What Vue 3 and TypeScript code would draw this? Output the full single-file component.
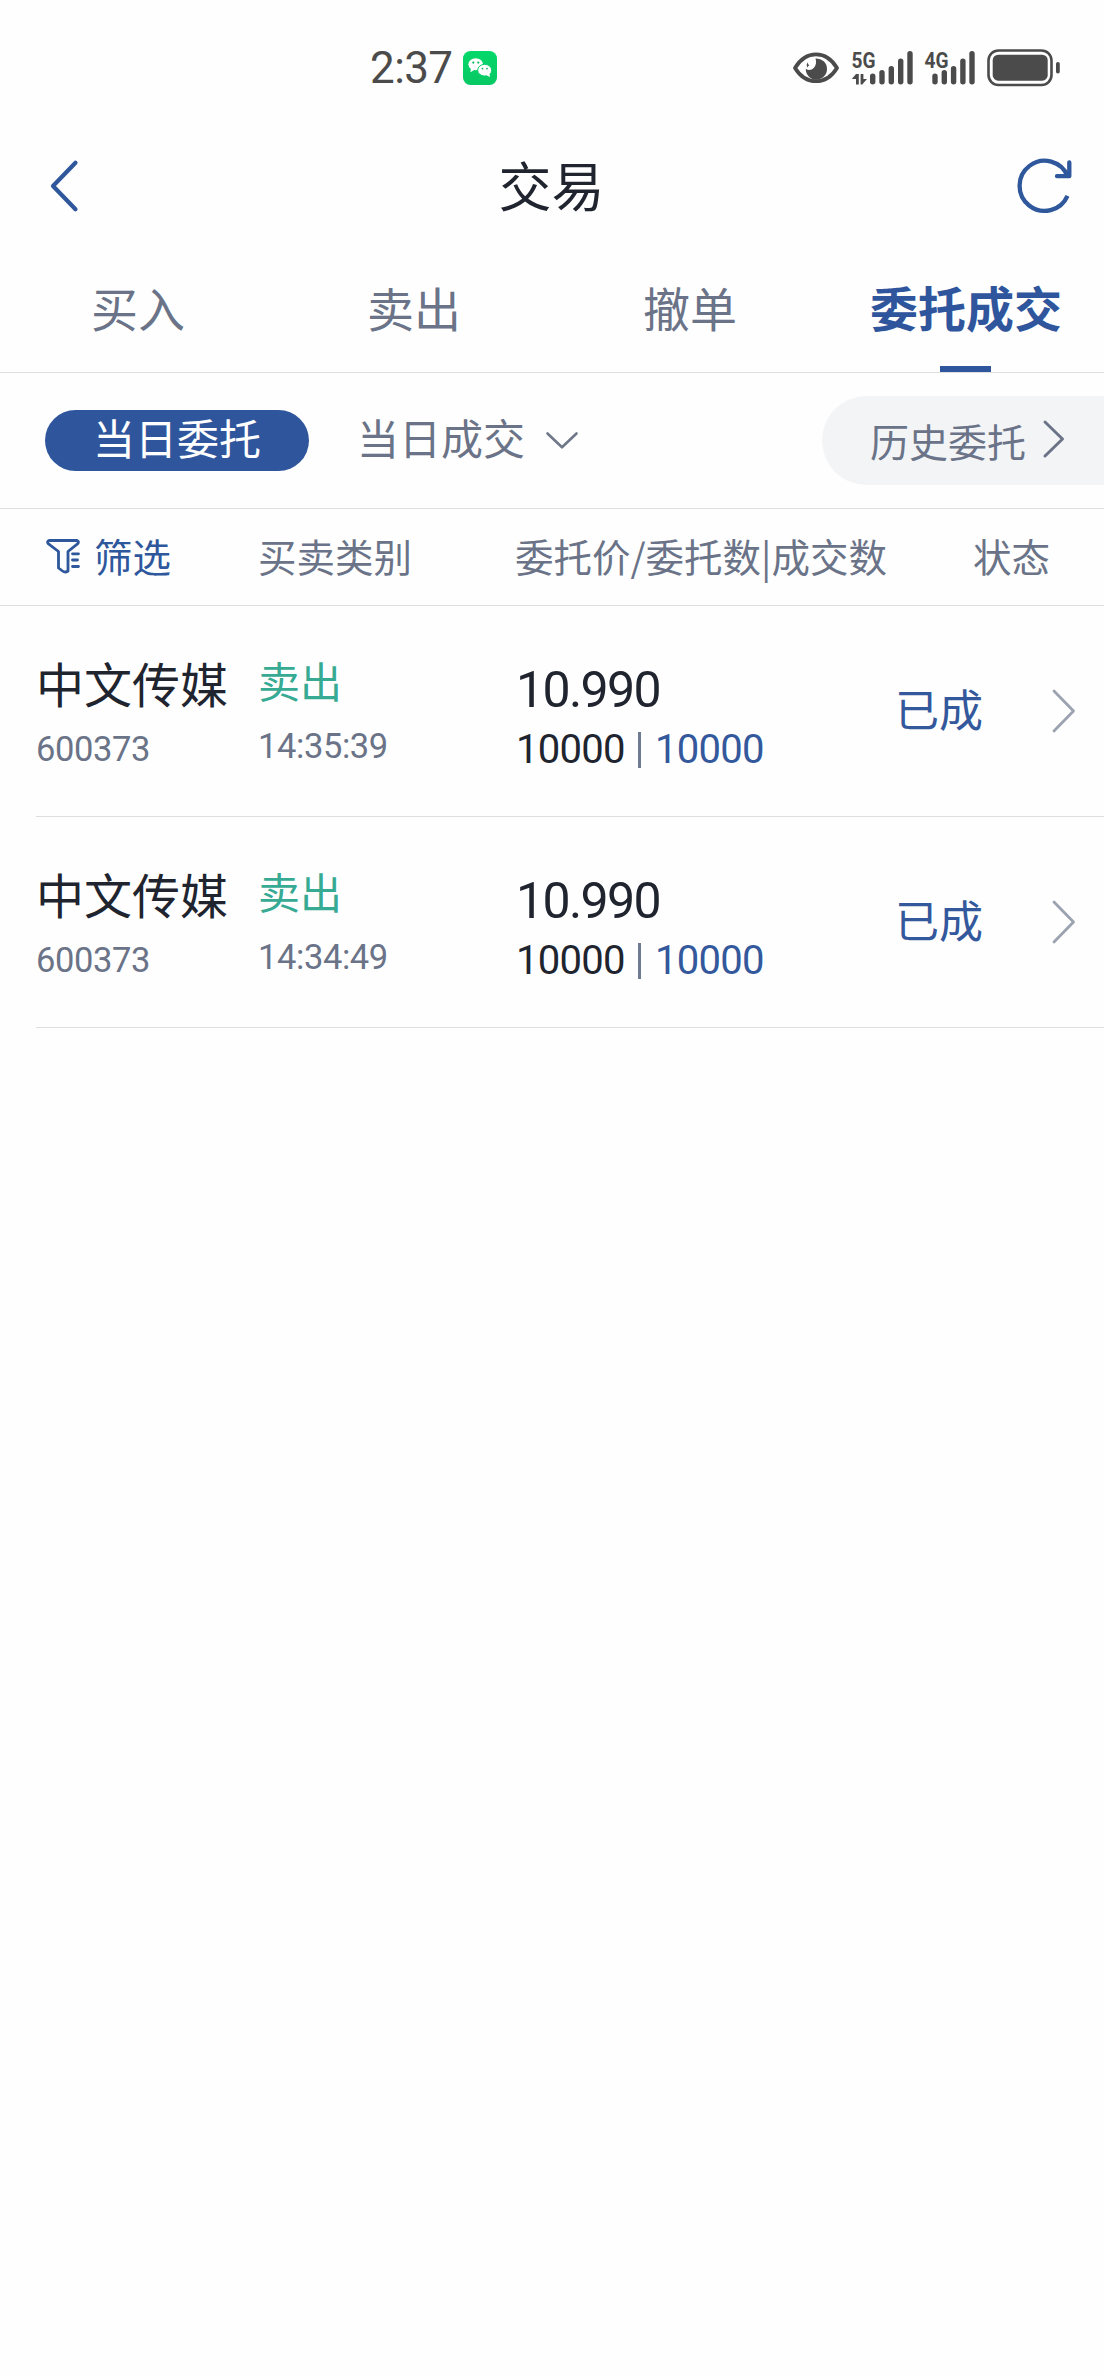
<script setup lang="ts">
interface Tab {
  label: string
  active?: boolean
}

interface Order {
  name: string
  code: string
  side: string
  time: string
  price: string
  amount: string
  filled: string
  status: string
}

interface Signal {
  label: string
  arrows: boolean
  bars: number[]
}

const tabs: Tab[] = [
  { label: '买入' },
  { label: '卖出' },
  { label: '撤单' },
  { label: '委托成交', active: true },
]

const orders: Order[] = [
  { name: '中文传媒', code: '600373', side: '卖出', time: '14:35:39', price: '10.990', amount: '10000', filled: '10000', status: '已成' },
  { name: '中文传媒', code: '600373', side: '卖出', time: '14:34:49', price: '10.990', amount: '10000', filled: '10000', status: '已成' },
]

const barTops: number[] = [23.5, 20, 16, 8.5, 1]

const signals: Signal[] = [
  { label: '5G', arrows: true, bars: [21.7, 31, 40.3, 49.7, 59] },
  { label: '4G', arrows: false, bars: [11, 20.3, 29.6, 38.9, 48] },
]
</script>

<template>
  <main class="screen">
    <div class="statusbar">
      <div class="clock">
        <span class="clock-time">2:37</span>
        <svg class="wechat" viewBox="0 0 34 34">
          <defs>
            <linearGradient id="wx" x1="0" y1="0" x2="0" y2="1">
              <stop offset="0" stop-color="#04d86a" />
              <stop offset="1" stop-color="#08c864" />
            </linearGradient>
          </defs>
          <rect width="34" height="34" rx="7.500" fill="url(#wx)" />
          <ellipse cx="12.700" cy="13.200" rx="7.300" ry="6" fill="#fff" />
          <path d="M8 17l-.6 4.200 4.200-2.400z" fill="#fff" />
          <ellipse cx="21.700" cy="19.200" rx="7" ry="5.900" fill="#fff" stroke="#06cf67" stroke-width="1" />
          <path d="M26.500 22.500l.5 3.400-3.600-1.700z" fill="#fff" />
          <g fill="#06b85c">
            <circle cx="10.300" cy="11.600" r="1.100" />
            <circle cx="15.300" cy="11.600" r="1.100" />
            <circle cx="19.500" cy="17.600" r=".9" />
            <circle cx="24" cy="17.600" r=".9" />
          </g>
        </svg>
      </div>
      <div class="indicators">
        <svg class="eye" viewBox="0 0 46 32">
          <path d="M2 16Q10 2.300 23 2.300T44 16Q36 29.200 23 29.200T2 16z" fill="none" stroke="#4b4b4b" stroke-width="3.800" stroke-linejoin="round" />
          <path d="M22.500 6.500a10.600 10.600 0 1 1-9.700 10.200c2.300 1.900 5.800 1.600 7.900-.6 2.500-2.500 2.900-6.300 1.800-9.600z" fill="#4b4b4b" />
          <path d="M14.400 10.300q.4 2.300 2 2.900-1.700.8-2.200 2.600-1.200-2.600.2-5.500z" fill="#4b4b4b" />
        </svg>
        <svg v-for="s in signals" :key="s.label" class="signal" :class="{ plain: !s.arrows }" :viewBox="s.arrows ? '0 0 64 36' : '0 0 52 36'">
          <text x="0.500" y="17.500" textLength="24" lengthAdjust="spacingAndGlyphs">{{ s.label }}</text>
          <g v-if="s.arrows" fill="#4b4b4b">
            <path d="M5 24h2.800v10.500h-2.800v-5.500h-4.200z" />
            <path d="M9.600 24h2.800v5h3.600l-4.800 5.500h-1.600z" />
          </g>
          <line
            v-for="(x, i) in s.bars"
            :key="i"
            :x1="x"
            :x2="x"
            :y1="barTops[i] + 2.7"
            y2="31.800"
            stroke="#4b4b4b"
            stroke-width="5.400"
            stroke-linecap="round"
          />
        </svg>
        <svg class="battery" viewBox="0 0 73 38">
          <rect x="1.500" y="1.500" width="63" height="34.500" rx="10" fill="none" stroke="#4b4b4b" stroke-width="2.600" />
          <rect x="5.700" y="5.700" width="55" height="26" rx="5.500" fill="#4b4b4b" />
          <rect x="69" y="13" width="3.800" height="11.500" rx="1.800" fill="#4b4b4b" />
        </svg>
      </div>
    </div>

    <header class="titlebar">
      <svg class="back" viewBox="0 0 28 52">
        <path d="M25.500 2.800L3 26l22.500 23.200" fill="none" stroke="#2f579c" stroke-width="4.200" stroke-linecap="round" stroke-linejoin="round" />
      </svg>
      <h1>交易</h1>
      <svg class="refresh" viewBox="0 0 56 56">
        <path d="M50.700 18.300A25 25 0 1 0 50.500 37.800" fill="none" stroke="#2f579c" stroke-width="4.300" />
        <path d="M40 18.200h12.300V4.500" fill="none" stroke="#2f579c" stroke-width="4.300" stroke-linecap="round" stroke-linejoin="round" />
      </svg>
    </header>

    <nav class="tabs">
      <div v-for="t in tabs" :key="t.label" class="tab" :class="{ active: t.active }">{{ t.label }}</div>
    </nav>

    <section class="filters">
      <div class="pill">当日委托</div>
      <div class="dropdown">
        <span>当日成交</span>
        <svg viewBox="0 0 32 17">
          <path d="M1.500 1.500L16 15.300 30.500 1.500" fill="none" stroke="#6f7788" stroke-width="2.600" stroke-linecap="round" stroke-linejoin="round" />
        </svg>
      </div>
      <div class="history">
        <span>历史委托</span>
        <svg viewBox="0 0 22 38">
          <path d="M2 2l17.500 17L2 36" fill="none" stroke="#6b7487" stroke-width="3" stroke-linecap="round" stroke-linejoin="round" />
        </svg>
      </div>
    </section>

    <div class="columns head">
      <div class="col-name filter">
        <svg viewBox="0 0 34 35">
          <g fill="none" stroke="#2f579c" stroke-width="2.800" stroke-linecap="round" stroke-linejoin="round">
            <path d="M3 1.500h28q2.400 1.200.8 3.200L22 12.500V32q-2.800 2-5.500 0l-4-3V12.500L2.200 4.700Q.6 2.700 3 1.500z" />
            <path d="M26.500 14.800h6M26.500 21h5M26.500 27.500h6" />
          </g>
        </svg>
        <span>筛选</span>
      </div>
      <div class="col-side">买卖类别</div>
      <div class="col-price">委托价/委托数|成交数</div>
      <div class="col-state">状态</div>
    </div>

    <ul class="orders">
      <li v-for="o in orders" :key="o.time" class="columns order">
        <div class="col-name">
          <div class="name">{{ o.name }}</div>
          <div class="code">{{ o.code }}</div>
        </div>
        <div class="col-side">
          <div class="side">{{ o.side }}</div>
          <div class="time">{{ o.time }}</div>
        </div>
        <div class="col-price">
          <div class="price">{{ o.price }}</div>
          <div class="amounts">
            <span>{{ o.amount }}</span>
            <i class="divider"></i>
            <span class="filled">{{ o.filled }}</span>
          </div>
        </div>
        <div class="status">{{ o.status }}</div>
        <svg class="more" viewBox="0 0 24 44">
          <path d="M2 2l19.500 20L2 42" fill="none" stroke="#9ba2b0" stroke-width="2.800" stroke-linecap="round" stroke-linejoin="round" />
        </svg>
      </li>
    </ul>
  </main>
</template>

<style>
body {
  background: #fefefe;
}
</style>

<style scoped>
.screen {
  width: 1104px;
  height: 2376px;
  overflow: hidden;
  box-sizing: border-box;
  background: #fefefe;
  color: #6a7387;
  font-family: "Noto Sans CJK SC", sans-serif;
}

svg {
  display: block;
  flex: none;
  overflow: visible;
}

.statusbar {
  height: 136px;
  display: flex;
  justify-content: space-between;
  padding: 0 44px 0 370px;
  box-sizing: border-box;
}

.clock {
  display: flex;
  height: 136px;
  align-items: center;
}

.clock-time {
  width: 93px;
  font: 44px/60px Roboto, sans-serif;
  letter-spacing: -0.6px;
  color: #4b4b4b;
}

.wechat {
  width: 34px;
  height: 34px;
}

.indicators {
  display: flex;
  height: 136px;
  align-items: center;
}

.eye {
  width: 46px;
  height: 32px;
  margin-right: 12px;
}

.signal {
  width: 64px;
  height: 36px;
  margin-right: 9px;
}

.signal.plain {
  width: 52px;
  margin-right: 11px;
}

.signal text {
  font: 700 22.500px Roboto, sans-serif;
  fill: #4b4b4b;
}

.battery {
  width: 73px;
  height: 38px;
}

.titlebar {
  height: 100px;
  display: flex;
  align-items: center;
  justify-content: space-between;
  padding: 0 31px 0 50px;
}

.back {
  width: 28px;
  height: 52px;
  margin-right: 8px;
}

h1 {
  margin: -4px 0 0;
  font-size: 53px;
  line-height: 76px;
  font-weight: 400;
  color: #20242f;
}

.refresh {
  width: 56px;
  height: 56px;
}

.tabs {
  display: flex;
  height: 136px;
  border-bottom: 1px solid #dededf;
}

.tab {
  position: relative;
  flex: 1 1 0;
  text-align: center;
  font-size: 47px;
  line-height: 141px;
}

.tab.active {
  color: #2f569d;
  font-size: 48px;
  font-weight: 700;
}

.tab.active::after {
  content: "";
  position: absolute;
  left: 50%;
  bottom: 0;
  width: 51px;
  height: 6px;
  margin-left: -26px;
  background: #2f569d;
}

.filters {
  height: 135px;
  display: flex;
  align-items: center;
  border-bottom: 1px solid #dededf;
  padding-left: 45px;
}

.pill {
  width: 264px;
  height: 61px;
  border-radius: 31px;
  background: #2f569d;
  color: #fff;
  font-size: 42px;
  line-height: 54px;
  text-align: center;
}

.dropdown {
  display: flex;
  align-items: center;
  gap: 21px;
  margin-left: 48px;
  font-size: 42px;
  line-height: 54px;
  height: 61px;
}

.dropdown span {
  height: 61px;
}

.dropdown svg {
  width: 32px;
  height: 17px;
}

.history {
  width: 282px;
  height: 89px;
  margin-left: auto;
  border-radius: 45px 0 0 45px;
  background: #f3f4f6;
  display: flex;
  align-items: center;
  box-sizing: border-box;
  padding-left: 48px;
  gap: 17px;
  font-size: 39px;
  line-height: 87px;
}

.history svg {
  width: 22px;
  height: 38px;
  margin-top: -3px;
}

.columns {
  display: flex;
}

.col-name {
  width: 222px;
}

.col-side {
  width: 257px;
}

.head {
  height: 96px;
  padding-left: 36px;
  border-bottom: 1px solid #dededf;
  font-size: 38.500px;
  line-height: 92px;
}

.filter {
  display: flex;
  color: #2f579c;
}

.filter svg {
  width: 34px;
  height: 35px;
  margin: 30px 14px 0 10px;
}

.head .col-price {
  width: 458px;
}

.orders {
  list-style: none;
  margin: 0;
  padding: 0 0 0 36px;
}

.order {
  height: 210px;
  border-bottom: 1px solid #dededf;
}

.name {
  margin-top: 40px;
  font-size: 48px;
  line-height: 72px;
  color: #20242f;
}

.code,
.time {
  font: 34.500px/40px Roboto, sans-serif;
  letter-spacing: -0.4px;
}

.code {
  margin-top: 11px;
}

.side {
  margin-top: 43px;
  font-size: 42px;
  line-height: 62px;
  color: #37aa94;
}

.time {
  margin-top: 15px;
}

.order .col-price {
  width: 380px;
  color: #20242f;
}

.price {
  margin: 52px 0 0 1px;
  font: 50px/64px Roboto, sans-serif;
  letter-spacing: -1.600px;
}

.amounts {
  display: flex;
  align-items: center;
  margin: 3px 0 0 1px;
  font: 40px/50px Roboto, sans-serif;
  letter-spacing: -0.700px;
}

.divider {
  width: 3px;
  height: 36px;
  margin: 0 14px 0 13px;
  background: #6f7b93;
}

.filled {
  color: #33589c;
}

.status {
  width: 157px;
  font-size: 44px;
  line-height: 205px;
  color: #33589c;
}

.more {
  width: 24px;
  height: 44px;
  margin-top: 83px;
}
</style>
